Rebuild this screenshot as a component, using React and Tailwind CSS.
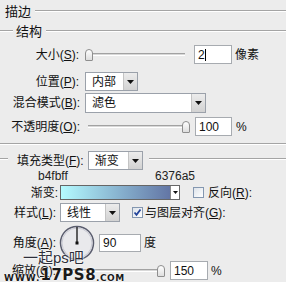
import React from 'react'

const FONT = "font-[family-name:'Liberation_Sans','Noto_Sans_CJK_SC',sans-serif]"

function Line({ className = '' }) {
  return <div className={`h-[2px] border-t border-b border-t-[#a4a4a4] border-b-white ${className}`} />
}

function Arrow() {
  return (
    <div className="w-[14px] h-full shrink-0 flex items-center justify-center border-l border-[#c4c4c4] bg-gradient-to-b from-[#ececec] to-[#d2d2d2]">
      <svg width="7" height="4" viewBox="0 0 7 4">
        <path d="M0 0h7L3.5 4z" fill="#111" />
      </svg>
    </div>
  )
}

function Select({ className = '', value }) {
  return (
    <div className={`flex h-full border border-[#9ba1aa] bg-white ${className}`}>
      <div className="flex-1 pl-[6px] flex items-center text-[12px]">{value}</div>
      <Arrow />
    </div>
  )
}

function Input({ className = '', value, caret }) {
  return (
    <div className={`h-full border border-[#a7abb0] bg-white flex items-center pl-[3px] text-[12px] ${className}`}>
      {value}
      {caret && <span className="w-px h-[12px] bg-black" />}
    </div>
  )
}

function Thumb() {
  return <div className="w-[8px] h-[12px] shrink-0 rounded-t-[4px] rounded-b-[1px] border border-[#8e8e8e] bg-gradient-to-b from-white to-[#dedede]" />
}

function Slider({ className = '', thumbEnd }) {
  const track = <div className="flex-1 h-[3px] border-t border-t-[#a2a2a2] border-b border-b-white bg-[#d8d8d8]" />
  return (
    <div className={`flex items-center ${className}`}>
      {thumbEnd ? track : <Thumb />}
      {thumbEnd ? <Thumb /> : track}
    </div>
  )
}

function Check({ checked }) {
  return (
    <div className="w-[11px] h-[11px] shrink-0 border border-[#8497b0] bg-gradient-to-br from-[#dde3ea] to-white flex items-center justify-center">
      {checked && (
        <svg width="9" height="9" viewBox="0 0 9 9">
          <path d="M1.5 4.5l2 2.3L7.5 1.5" stroke="#23449a" strokeWidth="1.8" fill="none" />
        </svg>
      )}
    </div>
  )
}

function Dial() {
  return (
    <svg width="36" height="36" viewBox="0 0 36 36" className="shrink-0">
      <circle cx="18" cy="18" r="16.5" fill="#e9e9ec" stroke="#5a5d6e" strokeWidth="1.5" />
      <circle cx="18" cy="18" r="15" fill="none" stroke="#c9cad4" strokeWidth="1" />
      <line x1="18" y1="18" x2="18" y2="2" stroke="#111" strokeWidth="1.3" />
      <rect x="16.5" y="16.5" width="3" height="3" fill="#111" />
    </svg>
  )
}

const K = ({ k }) => (
  <>
    (<u>{k}</u>):
  </>
)

export default function App() {
  return (
    <div className={`relative w-[286px] h-[282px] overflow-hidden bg-[#ececec] text-[#111] text-[12px] leading-none ${FONT}`}>
      <div className="flex flex-col pt-[2px]">
        {/* 描边 */}
        <div className="h-[18px] flex items-center">
          <span className="ml-[5px] text-[13px]">描边</span>
          <Line className="flex-1 ml-[4px]" />
        </div>
        {/* 结构 */}
        <div className="mt-[2px] h-[18px] flex items-center">
          <Line className="w-[13px]" />
          <span className="ml-[3px] text-[13px]">结构</span>
          <Line className="flex-1 ml-[4px]" />
        </div>

        <div className="mt-[5px] h-[19px] flex items-center">
          <div className="w-[79px] text-right">大小<K k="S" /></div>
          <Slider className="ml-[6px] w-[100px]" />
          <Input className="ml-[9px] w-[38px]" value="2" caret />
          <span className="ml-[3px]">像素</span>
        </div>

        <div className="mt-[8px] h-[19px] flex items-center">
          <div className="w-[79px] text-right">位置<K k="P" /></div>
          <Select className="ml-[6px] w-[53px]" value="内部" />
        </div>

        <div className="mt-[2px] h-[20px] flex items-center">
          <div className="w-[80px] text-right">混合模式<K k="B" /></div>
          <Select className="ml-[5px] w-[121px]" value="滤色" />
        </div>

        <div className="mt-[4px] h-[19px] flex items-center">
          <div className="w-[80px] text-right">不透明度<K k="O" /></div>
          <Slider className="ml-[8px] w-[102px]" thumbEnd />
          <Input className="ml-[5px] w-[37px]" value="100" />
          <span className="ml-[4px]">%</span>
        </div>

        <Line className="mt-[7px]" />

        <div className="mt-[6px] h-[19px] flex items-center">
          <Line className="w-[8px] -mt-[4px]" />
          <div className="ml-[9px]">填充类型<K k="F" /></div>
          <Select className="ml-[4px] w-[55px]" value="渐变" />
          <Line className="flex-1 ml-[6px] -mt-[4px]" />
        </div>

        <div className="h-[12px] flex items-center text-[#222]">
          <span className="ml-[38px] w-[117px]">b4fbff</span>
          <span>6376a5</span>
        </div>

        <div className="mt-[3px] h-[15px] flex items-center">
          <div className="w-[58px] text-right">渐变:</div>
          <div className="ml-[2px] w-[120px] h-full flex border border-[#666]">
            <div className="flex-1 bg-gradient-to-r from-[#b4fbff] to-[#6376a5]" />
            <div className="w-[9px] bg-white border-l border-[#888] flex items-center justify-center">
              <svg width="5" height="3" viewBox="0 0 5 3">
                <path d="M0 0h5L2.5 3z" fill="#111" />
              </svg>
            </div>
          </div>
          <div className="ml-[13px]"><Check /></div>
          <span className="ml-[4px]">反向<K k="R" /></span>
        </div>

        <div className="mt-[3px] h-[19px] flex items-center">
          <div className="w-[56px] text-right">样式<K k="L" /></div>
          <Select className="ml-[4px] w-[60px]" value="线性" />
          <div className="ml-[12px]"><Check checked /></div>
          <span className="ml-[2px]">与图层对齐<K k="G" /></span>
        </div>

        <div className="mt-[2px] h-[37px] flex items-center">
          <div className="w-[56px] text-right">角度<K k="A" /></div>
          <div className="ml-[3px]"><Dial /></div>
          <Input className="ml-[4px] w-[42px] !h-[18px]" value="90" />
          <span className="ml-[3px]">度</span>
        </div>

        <div className="h-[19px] flex items-center">
          <div className="w-[56px] text-right">缩放<K k="C" /></div>
          <Slider className="ml-[4px] w-[105px]" thumbEnd />
          <Input className="ml-[5px] w-[38px]" value="150" />
          <span className="ml-[3px]">%</span>
        </div>
      </div>

      {/* watermark */}
      <div className="absolute left-[23px] top-[250px] text-[15px] text-[#2e2f3a] [text-shadow:0_0_2px_#fff,0_0_2px_#fff]">
        一起ps吧
      </div>
      <div className="absolute left-[4px] top-[268px] flex items-end font-bold text-[#1b1b1b] font-[family-name:'DejaVu_Sans',sans-serif] [text-shadow:0_0_2px_#fff,0_0_1px_#fff]">
        <span className="text-[9px] tracking-[1px] leading-none">WWW.</span>
        <span className="text-[15px] leading-none tracking-[0.5px]">17PS8</span>
        <span className="text-[9px] tracking-[0.5px] leading-none">.COM</span>
      </div>
    </div>
  )
}
